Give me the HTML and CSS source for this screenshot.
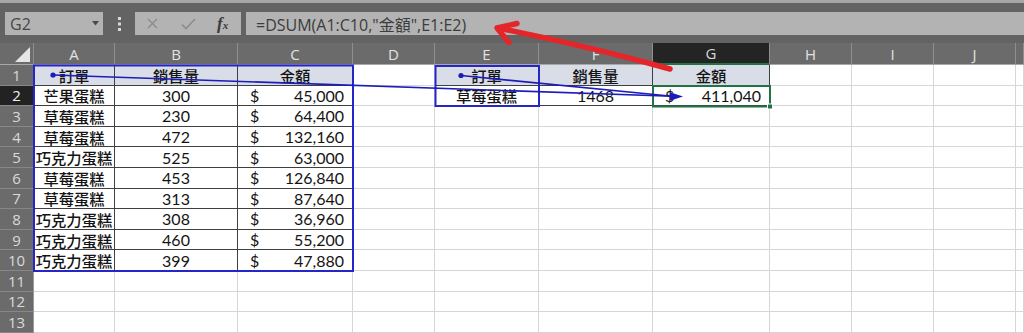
FILE: index.html
```html
<!DOCTYPE html>
<html lang="zh-Hant">
<head>
<meta charset="utf-8">
<title>DSUM</title>
<link rel="stylesheet" href="styles.css">
</head>
<body>
<div class="app">
  <div class="ribbon-edge"></div>
  <div class="fbar">
    <div class="namebox">
      <span>G2</span>
      <svg class="dd" width="7" height="5" viewBox="0 0 7 5"><polygon points="0,0 7,0 3.5,4.5" fill="#4a4a4a"/></svg>
    </div>
    <div class="grip">
      <svg width="3" height="14" viewBox="0 0 3 14"><rect x="0" y="0" width="3" height="3" fill="#d8d8d8"/><rect x="0" y="5.5" width="3" height="3" fill="#d8d8d8"/><rect x="0" y="11" width="3" height="3" fill="#d8d8d8"/></svg>
    </div>
    <div class="fbtns">
      <svg class="ic-x" width="11" height="11" viewBox="0 0 11 11"><path d="M1 1 L10 10 M10 1 L1 10" stroke="#8c8c8c" stroke-width="1.4" fill="none"/></svg>
      <svg class="ic-ok" width="15" height="12" viewBox="0 0 15 12"><path d="M1 6.5 L5 10.5 L14 1" stroke="#8c8c8c" stroke-width="1.6" fill="none"/></svg>
      <span class="fx"><i>f</i><small>x</small></span>
    </div>
    <div class="formula">=DSUM(A1:C10,"金額",E1:E2)</div>
  </div>
  <div class="sheet">
    <div class="grid">
      <div class="ch corner"><svg width="15" height="15" viewBox="0 0 15 15"><polygon points="15,0 15,15 0,15" fill="#e6e6e6"/></svg></div>
      <div class="ch">A</div><div class="ch">B</div><div class="ch">C</div><div class="ch">D</div><div class="ch">E</div><div class="ch">F</div><div class="ch sel">G</div><div class="ch">H</div><div class="ch">I</div><div class="ch">J</div><div class="ch"></div>

      <div class="rh">1</div>
      <div class="c d h zh">訂單</div><div class="c d h zh">銷售量</div><div class="c d h zh">金額</div><div class="c"></div>
      <div class="c d h zh">訂單</div><div class="c d h zh">銷售量</div><div class="c d h zh">金額</div>
      <div class="c"></div><div class="c"></div><div class="c"></div><div class="c"></div>

      <div class="rh sel">2</div>
      <div class="c d zh">芒果蛋糕</div><div class="c d">300</div><div class="c d acc"><span>$</span><span>45,000</span></div><div class="c"></div>
      <div class="c d zh">草莓蛋糕</div><div class="c d">1468</div><div class="c d acc"><span>$</span><span>411,040</span></div>
      <div class="c"></div><div class="c"></div><div class="c"></div><div class="c"></div>

      <div class="rh">3</div>
      <div class="c d zh">草莓蛋糕</div><div class="c d">230</div><div class="c d acc"><span>$</span><span>64,400</span></div>
      <div class="c"></div><div class="c"></div><div class="c"></div><div class="c"></div><div class="c"></div><div class="c"></div><div class="c"></div><div class="c"></div>

      <div class="rh">4</div>
      <div class="c d zh">草莓蛋糕</div><div class="c d">472</div><div class="c d acc"><span>$</span><span>132,160</span></div>
      <div class="c"></div><div class="c"></div><div class="c"></div><div class="c"></div><div class="c"></div><div class="c"></div><div class="c"></div><div class="c"></div>

      <div class="rh">5</div>
      <div class="c d zh">巧克力蛋糕</div><div class="c d">525</div><div class="c d acc"><span>$</span><span>63,000</span></div>
      <div class="c"></div><div class="c"></div><div class="c"></div><div class="c"></div><div class="c"></div><div class="c"></div><div class="c"></div><div class="c"></div>

      <div class="rh">6</div>
      <div class="c d zh">草莓蛋糕</div><div class="c d">453</div><div class="c d acc"><span>$</span><span>126,840</span></div>
      <div class="c"></div><div class="c"></div><div class="c"></div><div class="c"></div><div class="c"></div><div class="c"></div><div class="c"></div><div class="c"></div>

      <div class="rh">7</div>
      <div class="c d zh">草莓蛋糕</div><div class="c d">313</div><div class="c d acc"><span>$</span><span>87,640</span></div>
      <div class="c"></div><div class="c"></div><div class="c"></div><div class="c"></div><div class="c"></div><div class="c"></div><div class="c"></div><div class="c"></div>

      <div class="rh">8</div>
      <div class="c d zh">巧克力蛋糕</div><div class="c d">308</div><div class="c d acc"><span>$</span><span>36,960</span></div>
      <div class="c"></div><div class="c"></div><div class="c"></div><div class="c"></div><div class="c"></div><div class="c"></div><div class="c"></div><div class="c"></div>

      <div class="rh">9</div>
      <div class="c d zh">巧克力蛋糕</div><div class="c d">460</div><div class="c d acc"><span>$</span><span>55,200</span></div>
      <div class="c"></div><div class="c"></div><div class="c"></div><div class="c"></div><div class="c"></div><div class="c"></div><div class="c"></div><div class="c"></div>

      <div class="rh">10</div>
      <div class="c d zh">巧克力蛋糕</div><div class="c d">399</div><div class="c d acc"><span>$</span><span>47,880</span></div>
      <div class="c"></div><div class="c"></div><div class="c"></div><div class="c"></div><div class="c"></div><div class="c"></div><div class="c"></div><div class="c"></div>

      <div class="rh">11</div>
      <div class="c"></div><div class="c"></div><div class="c"></div><div class="c"></div><div class="c"></div><div class="c"></div><div class="c"></div><div class="c"></div><div class="c"></div><div class="c"></div><div class="c"></div>

      <div class="rh">12</div>
      <div class="c"></div><div class="c"></div><div class="c"></div><div class="c"></div><div class="c"></div><div class="c"></div><div class="c"></div><div class="c"></div><div class="c"></div><div class="c"></div><div class="c"></div>

      <div class="rh">13</div>
      <div class="c"></div><div class="c"></div><div class="c"></div><div class="c"></div><div class="c"></div><div class="c"></div><div class="c"></div><div class="c"></div><div class="c"></div><div class="c"></div><div class="c"></div>
    </div>
  </div>

  <svg class="overlay" width="1024" height="333" viewBox="0 0 1024 333">
    <rect x="34" y="65.5" width="319" height="205.5" fill="none" stroke="#2626c8" stroke-width="2"/>
    <rect x="435.5" y="66" width="103.5" height="40" fill="none" stroke="#2626c8" stroke-width="2"/>
    <rect x="653" y="86" width="117" height="20.5" fill="none" stroke="#217346" stroke-width="2"/>
    <rect x="767.5" y="104" width="5" height="5" fill="#217346" stroke="#ffffff" stroke-width="1"/>
    <line x1="53" y1="75" x2="672" y2="96.3" stroke="#1c1cb8" stroke-width="1.6"/>
    <line x1="461" y1="75.5" x2="672" y2="96.3" stroke="#1c1cb8" stroke-width="1.6"/>
    <circle cx="53" cy="75" r="2.6" fill="#1c1cb8"/>
    <circle cx="461" cy="75.5" r="2.6" fill="#1c1cb8"/>
    <polygon points="683,96.6 670,92.3 670,100.8" fill="#1c1cb8"/>
    <path d="M670 69 Q 588 46 498 28" stroke="#e4262b" stroke-width="5.5" fill="none" stroke-linecap="round"/>
    <path d="M517 23.5 L497 28 L509 42.5" stroke="#e4262b" stroke-width="5.5" fill="none" stroke-linecap="round" stroke-linejoin="round"/>
  </svg>
</div>
</body>
</html>
```

FILE: styles.css
```css
* { box-sizing: border-box; }
html, body { margin: 0; padding: 0; }
body {
  width: 1024px;
  height: 333px;
  overflow: hidden;
  background: #ffffff;
  font-family: "Lato", "Noto Sans CJK TC", sans-serif;
}
.app {
  position: relative;
  width: 1024px;
  height: 333px;
  background: #636363;
  overflow: hidden;
}
.ribbon-edge {
  height: 3px;
  background: #a6a6a6;
}
.fbar {
  display: flex;
  height: 23px;
  margin-top: 9px;
  padding-left: 5px;
}
.namebox {
  width: 98px;
  background: #b3b3b3;
  display: flex;
  align-items: center;
  justify-content: space-between;
  padding: 0 4px 0 5px;
  font: 16px "Open Sans", sans-serif;
  color: #474747;
}
.grip {
  width: 32px;
  display: flex;
  align-items: center;
  justify-content: center;
}
.fbtns {
  width: 106px;
  background: #b3b3b3;
  display: flex;
  align-items: center;
  padding-left: 12px;
}
.ic-x { margin-right: 23px; }
.ic-ok { margin-right: 21px; }
.fx {
  font-family: "Liberation Serif", serif;
  color: #3a3a3a;
  font-size: 17px;
  line-height: 1;
}
.fx i { font-style: italic; font-weight: bold; }
.fx small { font-size: 11px; font-style: italic; font-weight: bold; }
.formula {
  flex: 1;
  margin-left: 5px;
  background: #b3b3b3;
  padding-left: 10px;
  display: flex;
  align-items: center;
  font: 16px "Open Sans", "Noto Sans CJK TC", sans-serif;
  color: #3c3c3c;
  white-space: nowrap;
}
.sheet {
  margin-top: 8px;
}
.grid {
  display: grid;
  grid-template-columns: 34px 81px 123px 115px 82px 104px 114px 117px 82px 82px 82px 1fr;
  grid-template-rows: 22px repeat(13, 20.6px);
  background: #ffffff;
}
.ch {
  background: #6b6b6b;
  color: #e2e2e2;
  border-right: 1px solid #8f8f8f;
  border-bottom: 1px solid #a8a8a8;
  display: flex;
  align-items: center;
  justify-content: center;
  font: 15px "Open Sans", sans-serif;
}
.ch.corner {
  justify-content: flex-end;
  align-items: flex-end;
  padding: 0 3px 2px 0;
}
.ch.sel {
  background: #242424;
  color: #d6d6d6;
  border-bottom: 2px solid #217346;
}
.rh {
  background: #6b6b6b;
  color: #dadada;
  border-bottom: 1px solid #878787;
  border-right: 1px solid #9a9a9a;
  display: flex;
  align-items: center;
  justify-content: center;
  font: 15px "Open Sans", sans-serif;
}
.rh.sel {
  background: #222222;
  color: #f0f0f0;
}
.c {
  border-right: 1px solid #d6d6d6;
  border-bottom: 1px solid #d6d6d6;
  display: flex;
  align-items: center;
  justify-content: center;
  font-size: 16px;
  color: #141414;
  white-space: nowrap;
  overflow: hidden;
}
.c.d {
  border-right-color: #3f3f3f;
  border-bottom-color: #3f3f3f;
}
.c.h {
  background: #d9dde8;
}
.c.zh {
  font-family: "Noto Sans CJK TC", sans-serif;
  font-size: 15.3px;
  font-weight: 500;
}
.c.acc {
  justify-content: space-between;
  padding: 0 8px 0 12px;
}
.overlay {
  position: absolute;
  top: 0;
  left: 0;
  pointer-events: none;
}
```
